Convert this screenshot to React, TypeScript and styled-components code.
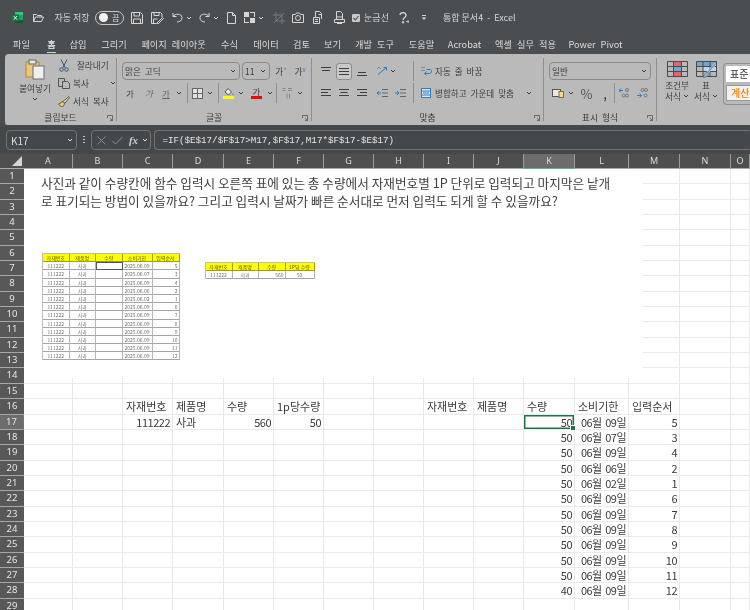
import React from "react";
import styled, { createGlobalStyle } from "styled-components";

const FONT = '"Noto Sans CJK KR", "Noto Sans", sans-serif';

const Global = createGlobalStyle`
  html, body { margin: 0; padding: 0; background: #fff; }
  #root { width: 750px; height: 610px; overflow: hidden; }
`;

const Page = styled.div`
  width: 750px;
  height: 610px;
  overflow: hidden;
  background: #4b4e51;
  font-family: ${FONT};
  filter: blur(0.3px);
`;

const TitleBar = styled.div`
  height: 35px;
  display: flex;
  align-items: center;
  color: #d6d6d6;
  font-size: 9px;
  line-height: 12px;
  white-space: nowrap;
`;

const Spot = styled.div<{ $ml?: number; $w?: number; $h?: number; $justify?: string }>`
  flex: none;
  margin-left: ${(p) => p.$ml ?? 0}px;
  ${(p) => (p.$w !== undefined ? `width: ${p.$w}px;` : "")}
  ${(p) => (p.$h !== undefined ? `height: ${p.$h}px;` : "")}
  display: flex;
  align-items: center;
  justify-content: ${(p) => p.$justify ?? "center"};
  white-space: nowrap;
`;

const Toggle = styled.div`
  flex: none;
  margin-left: 5px;
  width: 29px;
  height: 14px;
  box-sizing: border-box;
  border: 1px solid #c8c8c8;
  border-radius: 7px;
  display: flex;
  align-items: center;
  padding-left: 3px;
  gap: 4px;
  font-size: 8px;
`;

const Knob = styled.span`
  width: 9px;
  height: 9px;
  border-radius: 50%;
  background: #f2f2f2;
`;

const TabBar = styled.div`
  height: 19px;
  display: flex;
  align-items: center;
  color: #dcdcdc;
  font-size: 9.2px;
  line-height: 13px;
  word-spacing: 3px;
`;

const Tab = styled.div<{ $ml: number; $w: number; $active?: boolean }>`
  flex: none;
  position: relative;
  margin-left: ${(p) => p.$ml}px;
  width: ${(p) => p.$w}px;
  white-space: nowrap;
  display: flex;
  justify-content: center;
  ${(p) => (p.$active ? "font-weight: 500; color: #f0f0f0;" : "")}
  &::after {
    content: "";
    display: ${(p) => (p.$active ? "block" : "none")};
    position: absolute;
    left: 0;
    right: 0;
    bottom: -2px;
    height: 1.5px;
    background: #b5e0ca;
  }
`;

const Ribbon = styled.div`
  margin-left: 5px;
  height: 71px;
  background: #bababa;
  border-radius: 4px 0 0 4px;
  box-shadow: 0 1px 0 #8d8d8d;
  display: flex;
  color: #3d3d3d;
  font-size: 8.6px;
  line-height: 11px;
  word-spacing: 2px;
  overflow: hidden;
`;

const Group = styled.div<{ $w: number }>`
  flex: none;
  width: ${(p) => p.$w}px;
  position: relative;
  display: flex;
  flex-direction: column;
`;

const GroupBody = styled.div`
  height: 57px;
  box-sizing: border-box;
  padding-top: 7px;
  display: flex;
  flex-direction: column;
  gap: 2px;
`;

const GroupLabel = styled.div`
  text-align: center;
  height: 14px;
  line-height: 13px;
  font-size: 8.8px;
  color: #3a3a3a;
`;

const Launcher = styled.svg`
  position: absolute;
  right: 3px;
  bottom: 4px;
  width: 6px;
  height: 6px;
  color: #555;
`;

const GroupSep = styled.div`
  flex: none;
  width: 1px;
  margin: 4px 0 4px;
  background: #8f8f8f;
`;

const Row = styled.div`
  height: 20px;
  display: flex;
  align-items: center;
`;

const RowSep = styled.div<{ $ml: number }>`
  flex: none;
  margin-left: ${(p) => p.$ml}px;
  width: 1px;
  height: 20px;
  background: #8f8f8f;
`;

const ClipBody = styled.div`
  height: 57px;
  display: flex;
`;

const PasteCol = styled.div`
  flex: none;
  width: 42px;
  padding: 5px 0 0 9px;
  display: flex;
  flex-direction: column;
  align-items: center;
  gap: 2px;
`;

const ClipList = styled.div`
  flex: none;
  padding-top: 2px;
  margin-left: 2px;
  display: flex;
  flex-direction: column;
`;

const ClipItem = styled.div`
  height: 18.5px;
  display: flex;
  align-items: center;
  gap: 3px;
  white-space: nowrap;
`;

const Select = styled.div<{ $ml: number; $w: number }>`
  flex: none;
  margin-left: ${(p) => p.$ml}px;
  width: ${(p) => p.$w}px;
  height: 18px;
  box-sizing: border-box;
  border: 1.5px solid #8a8a8a;
  border-radius: 4px;
  display: flex;
  align-items: center;
  justify-content: space-between;
  padding: 0 3px 0 2px;
  white-space: nowrap;
`;

const GlyphChar = styled.span<{ $tone?: string; $deco?: string; $style?: string; $size?: number }>`
  font-size: ${(p) => p.$size ?? 8.5}px;
  color: ${(p) => p.$tone ?? "#444"};
  font-style: ${(p) => p.$style ?? "normal"};
  text-decoration: ${(p) => p.$deco ?? "none"};
`;

const GrowMark = styled.span`
  font-size: 6px;
  color: #2b7cc4;
  align-self: flex-start;
  line-height: 8px;
`;

const ColorBar = styled.div<{ $color: string }>`
  width: 11px;
  height: 3px;
  background: ${(p) => p.$color};
`;

const ColorStack = styled.div`
  display: flex;
  flex-direction: column;
  align-items: center;
  line-height: 9px;
`;

const Pressed = styled.div`
  flex: none;
  margin-left: 5px;
  width: 16px;
  height: 17px;
  box-sizing: border-box;
  background: #c9c9c9;
  border: 1px solid #8d8d8d;
  border-radius: 3px;
  display: flex;
  align-items: center;
  justify-content: center;
`;

const StyleBody = styled.div`
  height: 57px;
  display: flex;
  padding-top: 7px;
  box-sizing: border-box;
`;

const StyleBtn = styled.div<{ $ml: number; $w: number }>`
  flex: none;
  margin-left: ${(p) => p.$ml}px;
  width: ${(p) => p.$w}px;
  display: flex;
  flex-direction: column;
  align-items: center;
  line-height: 10.5px;
  white-space: nowrap;
`;

const StyleText = styled.div<{ $mt?: number }>`
  display: flex;
  align-items: center;
  gap: 2px;
  height: 10.5px;
  margin-top: ${(p) => p.$mt ?? 0}px;
`;

const Gallery = styled.div`
  flex: none;
  margin: 2px 0 0 5px;
  width: 40px;
  height: 42px;
  box-sizing: border-box;
  border: 1px solid #8f8f8f;
  border-right: 0;
  border-radius: 4px 0 0 4px;
  padding: 2px 0 0 2px;
  display: flex;
  flex-direction: column;
  gap: 3px;
`;

const StyleChip = styled.div<{ $bg: string; $fg: string }>`
  height: 16px;
  background: ${(p) => p.$bg};
  color: ${(p) => p.$fg};
  font-size: 10px;
  line-height: 16px;
  padding-left: 4px;
  white-space: nowrap;
  ${(p) => (p.$bg === "#fff" ? "" : "border: 1px solid #999; border-right: 0; box-sizing: border-box; line-height: 14px; font-weight: 500;")}
`;

const FormulaZone = styled.div`
  height: 29px;
  box-sizing: border-box;
  padding: 5px 0 4px;
  background: #45484a;
  display: flex;
  color: #dedede;
`;

const FBox = styled.div<{ $ml: number; $w?: number; $grow?: boolean }>`
  margin-left: ${(p) => p.$ml}px;
  ${(p) => (p.$w ? `width: ${p.$w}px; flex: none;` : "")}
  ${(p) => (p.$grow ? "flex: 1;" : "")}
  height: 20px;
  box-sizing: border-box;
  border: 1px solid #737373;
  border-right-color: ${(p) => (p.$grow ? "transparent" : "#737373")};
  border-radius: ${(p) => (p.$grow ? "4px 0 0 4px" : "4px")};
  display: flex;
  align-items: center;
`;

const NameText = styled.span`
  font-size: 10px;
  margin-left: 4px;
  width: 56px;
`;

const Dots = styled.div`
  flex: none;
  margin-left: 6px;
  width: 1.5px;
  height: 8px;
  align-self: center;
  background: repeating-linear-gradient(#c4c4c4 0 1.5px, transparent 1.5px 3px);
`;

const Fx = styled.span`
  font-family: "Liberation Serif", serif;
  font-style: italic;
  font-size: 11px;
  font-weight: 700;
  color: #d0d0d0;
`;

const FormulaText = styled.span`
  margin-left: 8px;
  font-family: "Liberation Mono", monospace;
  font-size: 9.2px;
  color: #e6e6e6;
  white-space: nowrap;
`;

const COLS = [24, 49, 50, 50, 51, 50, 50, 50, 50, 50, 50, 51, 54, 51, 51, 19];
const ROW_H = 15.35;

const Sheet = styled.div`
  position: relative;
  height: 456px;
  background: #fff;
  display: grid;
  grid-template-columns: ${COLS.map((c) => c + "px").join(" ")};
  grid-template-rows: 15px repeat(29, ${ROW_H}px);
  color: #3a3a3a;
`;

const Corner = styled.div`
  background: #4f4f4f;
  border-bottom: 1px solid #aaa;
  box-sizing: border-box;
  position: relative;
  overflow: hidden;
  &::after {
    content: "";
    position: absolute;
    right: 2px;
    bottom: 2px;
    border-style: solid;
    border-width: 0 0 10px 10px;
    border-color: transparent transparent #d4d4d4 transparent;
  }
`;

const ColHead = styled.div<{ $on?: boolean }>`
  box-sizing: border-box;
  background: ${(p) => (p.$on ? "#6c6c6c" : "#4f4f4f")};
  border-right: 1px solid #9c9c9c;
  border-bottom: ${(p) => (p.$on ? "1.5px solid #5fb58a" : "1px solid #aaa")};
  color: #dcdcdc;
  font-family: "Noto Sans", sans-serif;
  font-size: 9px;
  line-height: 14px;
  text-align: center;
`;

const RowHead = styled.div<{ $on?: boolean }>`
  box-sizing: border-box;
  background: ${(p) => (p.$on ? "#6c6c6c" : "#585858")};
  border-bottom: 1px solid #a8a8a8;
  ${(p) => (p.$on ? "border-right: 1.5px solid #2f9a63;" : "")}
  color: #e6e6e6;
  font-family: "Noto Sans", sans-serif;
  font-size: 9.5px;
  line-height: 14px;
  text-align: center;
`;

const Cell = styled.div<{ $right?: boolean; $sel?: boolean }>`
  box-sizing: border-box;
  position: relative;
  border-right: 1px solid #e9e9e9;
  border-bottom: 1px solid #e9e9e9;
  font-size: 11px;
  line-height: 15px;
  padding: 0 2px 0 3px;
  white-space: nowrap;
  overflow: visible;
  text-align: ${(p) => (p.$right ? "right" : "left")};
  ${(p) => (p.$right ? "letter-spacing: -0.5px; word-spacing: 1.5px;" : "")}
  ${(p) =>
    p.$sel
      ? `box-shadow: inset 0 0 0 1.5px #217346;
         &::after { content: ""; position: absolute; right: -2px; bottom: -2px; width: 4px; height: 4px; background: #217346; border: 0.5px solid #fff; z-index: 2; }`
      : ""}
`;

const Panel = styled.div`
  position: absolute;
  left: 24px;
  top: 15px;
  width: 619px;
  height: 209px;
  background: #fff;
  box-sizing: border-box;
  padding: 5px 0 0 17px;
`;

const QuestionLine = styled.div`
  font-size: 12.65px;
  line-height: 18px;
  color: #404040;
  white-space: nowrap;
`;

const Shots = styled.div`
  display: flex;
  align-items: flex-start;
  margin: 43px 0 0 1px;
  gap: 25px;
  filter: blur(0.25px);
`;

const MiniTable = styled.div<{ $cols: string; $top?: number }>`
  flex: none;
  margin-top: ${(p) => p.$top ?? 0}px;
  display: grid;
  grid-template-columns: ${(p) => p.$cols};
  grid-auto-rows: 8.2px;
  border-top: 0.5px solid #bbb;
  border-left: 0.5px solid #bbb;
`;

const MiniHead = styled.div`
  box-sizing: border-box;
  background: #ffff00;
  border-right: 0.5px solid #a0a000;
  border-bottom: 0.5px solid #a0a000;
  font-size: 5px;
  line-height: 8px;
  text-align: center;
  color: #55550c;
  white-space: nowrap;
`;

const MiniCell = styled.div<{ $align?: string; $picked?: boolean }>`
  box-sizing: border-box;
  border-right: 0.5px solid #b5b5b5;
  border-bottom: 0.5px solid #a5a5a5;
  font-size: 5px;
  line-height: 8px;
  color: #707070;
  padding: 0 1px;
  text-align: ${(p) => p.$align ?? "center"};
  white-space: nowrap;
  ${(p) => (p.$picked ? "outline: 1px solid #555; outline-offset: -1px;" : "")}
`;

type IconProps = { w: number; h: number; vb?: string; color?: string; children: React.ReactNode };
const Svg = ({ w, h, vb, color, children }: IconProps) => (
  <svg
    width={w}
    height={h}
    viewBox={vb ?? `0 0 ${w} ${h}`}
    fill="none"
    stroke={color ?? "currentColor"}
    strokeWidth={1}
    style={{ flex: "none", display: "block" }}
  >
    {children}
  </svg>
);

const Chev = ({ c }: { c?: string }) => (
  <Svg w={6} h={4} color={c}>
    <path d="M1 1l2 2 2-2" />
  </Svg>
);

const Lines = ({ ys, xs }: { ys: number[]; xs: [number, number][] }) => (
  <Svg w={10} h={12}>
    {ys.map((y, i) => (
      <path key={i} d={`M${xs[i][0]} ${y}H${xs[i][1]}`} />
    ))}
  </Svg>
);

const ExcelLogo = () => (
  <Svg w={11} h={11} color="none">
    <rect x={3} y={0} width={8} height={11} fill="#21a366" />
    <rect x={3} y={0} width={8} height={3} fill="#33c481" />
    <rect x={3} y={8} width={8} height={3} fill="#185c37" />
    <rect x={0} y={2.5} width={7} height={6.5} fill="#107c41" />
    <path d="M1.8 4l3.2 3.6M5 4L1.8 7.6" stroke="#fff" strokeWidth={0.9} />
  </Svg>
);

const Launch = () => (
  <Launcher viewBox="0 0 6 6" fill="none" stroke="currentColor">
    <path d="M.5 3V.5H5.5V3M3 3l2.5 2.5M5.5 3v2.5H3" strokeWidth={0.8} />
  </Launcher>
);

const PasteIcon = () => (
  <Svg w={20} h={21}>
    <rect x={1} y={3} width={13} height={15} fill="#e6c97f" stroke="#b9862b" />
    <rect x={4} y={1} width={7} height={4} fill="#e8e8e8" stroke="#666" />
    <rect x={8} y={7} width={11} height={13} fill="#efefef" stroke="#6d6d6d" />
  </Svg>
);

const GridIcon = ({ fillA, fillB }: { fillA: string; fillB: string }) => (
  <Svg w={21} h={16} color="#4b4b4b">
    <rect x={6.5} y={0.5} width={8} height={5} fill={fillA} stroke="none" />
    <rect x={6.5} y={5.5} width={8} height={5} fill={fillB} stroke="none" />
    <rect x={6.5} y={10.5} width={8} height={5} fill={fillA} stroke="none" />
    <path d="M.5.5h20v15H.5zM.5 5.5h20M.5 10.5h20M6.5.5v15M14.5.5v15" />
  </Svg>
);

const TableBrushIcon = () => (
  <Svg w={21} h={18} color="#4b4b4b">
    <rect x={0.5} y={0.5} width={20} height={5} fill="#6fa8d6" stroke="none" />
    <rect x={7} y={5.5} width={13} height={5} fill="#bcd6ea" stroke="none" />
    <path d="M.5.5h20v15H.5zM.5 5.5h20M.5 10.5h20M7 .5v15M14 .5v15" />
    <path d="M19.5 3L11 12" stroke="#e8e8e8" strokeWidth={2.4} />
    <path d="M19.5 3L11 12" stroke="#5d8fb8" strokeWidth={1.2} />
    <path d="M11.5 11.2c-2.5.3-3.4 2.2-4 5.3 2.7-.3 5-1.4 5.5-4z" fill="#8db4d6" stroke="#4c6f8c" strokeWidth={0.7} />
  </Svg>
);

const names = ["자재번호", "제품명", "수량", "소비기한", "입력순서"];
const shotDays = ["09", "07", "09", "06", "02", "09", "09", "09", "09", "09", "09", "09"];
const orders = [5, 3, 4, 2, 1, 6, 7, 8, 9, 10, 11, 12];

const cells: Record<string, { t: string; r?: boolean }> = {
  C16: { t: "자재번호" },
  D16: { t: "제품명" },
  E16: { t: "수량" },
  F16: { t: "1p당수량" },
  C17: { t: "111222", r: true },
  D17: { t: "사과" },
  E17: { t: "560", r: true },
  F17: { t: "50", r: true },
  I16: { t: "자재번호" },
  J16: { t: "제품명" },
  K16: { t: "수량" },
  L16: { t: "소비기한" },
  M16: { t: "입력순서" },
};
orders.forEach((n, i) => {
  const row = 17 + i;
  cells[`K${row}`] = { t: i === 11 ? "40" : "50", r: true };
  cells[`L${row}`] = { t: `06월 ${shotDays[i]}일`, r: true };
  cells[`M${row}`] = { t: String(n), r: true };
});

const letters = "ABCDEFGHIJKLMNO".split("");
const tabs: [string, number, number][] = [
  ["파일", 13, 17],
  ["홈", 17, 9],
  ["삽입", 13, 18],
  ["그리기", 13, 28],
  ["페이지 레이아웃", 12, 67],
  ["수식", 14, 17],
  ["데이터", 15, 26],
  ["검토", 14, 17],
  ["보기", 14, 17],
  ["개발 도구", 14, 39],
  ["도움말", 14, 27],
  ["Acrobat", 13, 33],
  ["엑셀 실무 적용", 14, 61],
  ["Power Pivot", 15, 49],
];

export default function App() {
  return (
    <Page>
      <Global />
      <TitleBar>
        <Spot $ml={12} $w={11}><ExcelLogo /></Spot>
        <Spot $ml={10} $w={11}>
          <Svg w={11} h={10}><path d="M.5 8.5v-7h3l1 1h4v1.500M.5 8.500l2-4.500h8l-2 4.500z" /></Svg>
        </Spot>
        <Spot $ml={10} $w={36}>자동 저장</Spot>
        <Toggle><Knob />끔</Toggle>
        <Spot $ml={7} $w={12}>
          <Svg w={12} h={12}><path d="M.5.5h9l2 2v9H.5zM3 .5v3.500h5.500V.5M2.500 11.500V7h7v4.500" /></Svg>
        </Spot>
        <Spot $ml={8} $w={13}>
          <Svg w={13} h={12}><path d="M.5.5h9l1.500 1.500v3M3 .5v3h5V.5M.5.5v11h5M2.500 11V7h4M6 11l5.500-5.500 1 1L7 12H6z" /></Svg>
        </Spot>
        <Spot $ml={8} $w={11}>
          <Svg w={11} h={11}><path d="M1 1v3.500h3.500M1 4.500C3 1.500 9.500 1 10 5.500c.3 3-2.500 4.500-5 4.500" /></Svg>
        </Spot>
        <Spot $ml={3} $w={6}><Chev /></Spot>
        <Spot $ml={7} $w={11}>
          <Svg w={11} h={11}><path d="M10 1v3.500H6.500M10 4.500C8 1.500 1.500 1 1 5.500c-.3 3 2.500 4.500 5 4.500" /></Svg>
        </Spot>
        <Spot $ml={3} $w={6}><Chev /></Spot>
        <Spot $ml={8} $w={9}>
          <Svg w={9} h={12}><path d="M.5.5h5l3 3v8h-8zM5.500.5v3h3" /></Svg>
        </Spot>
        <Spot $ml={8} $w={11}>
          <Svg w={11} h={11}>
            <rect x={0.5} y={0.5} width={10} height={10} />
            <rect x={0} y={0} width={5} height={5} fill="currentColor" />
            <rect x={5.5} y={5.5} width={5} height={5} fill="currentColor" />
            <path d="M0 5.500h11M5.500 0v11" stroke="#4b4e51" />
          </Svg>
        </Spot>
        <Spot $ml={3} $w={6}><Chev /></Spot>
        <Spot $ml={9} $w={12}>
          <Svg w={12} h={12} color="#777"><path d="M3 0v9h9M0 3h9v9M1 11L11 1" /></Svg>
        </Spot>
        <Spot $ml={7} $w={12}>
          <Svg w={12} h={11}><path d="M.5 2.500h3l1-1.500h3l1 1.500h3v8H.5z" /><circle cx={6} cy={6} r={2.5} /></Svg>
        </Spot>
        <Spot $ml={9} $w={10}>
          <Svg w={10} h={13}><path d="M2.500 6V.5h4l2 2V8M5.500 3.500h3M.5 6.500h6v6h-6zM2 8.500h3M2 10.500h3" /></Svg>
        </Spot>
        <Spot $ml={11} $w={11}>
          <Svg w={11} h={13}><path d="M2.500 6V.5h4l2 2V6M.5 8.500h10v3h-10zM2.500 8.500V6h6v2.500M3 12.500h5" /></Svg>
        </Spot>
        <Spot $ml={7} $w={8}>
          <Svg w={8} h={8} color="none">
            <rect width={8} height={8} rx={1} fill="#c9c9c9" />
            <path d="M1.500 4l2 2 3-4" stroke="#4b4e51" strokeWidth={1.1} />
          </Svg>
        </Spot>
        <Spot $ml={4} $w={25}>눈금선</Spot>
        <Spot $ml={10} $w={10}>
          <Svg w={10} h={12}>
            <path d="M1 3c.5-3.200 6-3 6 .3C7 6 4 5.500 4 8" strokeWidth={1.3} />
            <circle cx={4} cy={10.3} r={0.8} fill="currentColor" />
            <path d="M7 9.500h3M8.700 8l1.300 1.500L8.700 11" strokeWidth={0.8} />
          </Svg>
        </Spot>
        <Spot $ml={12} $w={6}>
          <Svg w={6} h={6}><path d="M1 .5h4" /><path d="M.8 2.500h4.400L3 5z" fill="currentColor" stroke="none" /></Svg>
        </Spot>
        <Spot $ml={16}>통합 문서4&nbsp; -&nbsp; Excel</Spot>
      </TitleBar>

      <TabBar>
        {tabs.map(([label, ml, w], i) => (
          <Tab key={label} $ml={ml} $w={w} $active={i === 1}>{label}</Tab>
        ))}
      </TabBar>

      <Ribbon>
        <Group $w={111}>
          <ClipBody>
            <PasteCol>
              <PasteIcon />
              <Spot $h={13} $w={36}>붙여넣기</Spot>
              <Chev />
            </PasteCol>
            <ClipList>
              <ClipItem>
                <Spot $w={12}>
                  <Svg w={10} h={13} color="#33587f"><path d="M2 .5l4 8M8 .5l-4 8" /><circle cx={2.5} cy={10.5} r={1.8} /><circle cx={7.5} cy={10.5} r={1.8} /></Svg>
                </Spot>
                &nbsp;잘라내기
              </ClipItem>
              <ClipItem>
                <Spot $w={12}>
                  <Svg w={12} h={11} color="#555"><path d="M.5.5h6v8h-6z" /><path d="M4.500 3.500h5l2 2v5h-7z" fill="#bababa" /></Svg>
                </Spot>
                복사
                <Spot $ml={18} $w={6}><Chev /></Spot>
              </ClipItem>
              <ClipItem>
                <Spot $w={12}>
                  <Svg w={12} h={11} color="#6b5b33"><path d="M5 5.500l6-5 .8.8-5 6z" fill="#dddddd" /><path d="M5 5.500L.5 8c.5 1 2.500 3 4 3 1-1 2-2.500 2-3.700z" fill="#e6c97f" /></Svg>
                </Spot>
                서식 복사
              </ClipItem>
            </ClipList>
          </ClipBody>
          <GroupLabel>클립보드</GroupLabel>
          <Launch />
        </Group>
        <GroupSep />

        <Group $w={194}>
          <GroupBody>
            <Row>
              <Select $ml={5} $w={118}>맑은 고딕<Chev /></Select>
              <Select $ml={2} $w={28}><span>11</span><Chev /></Select>
              <Spot $ml={4} $w={14}>가<GrowMark>^</GrowMark></Spot>
              <Spot $ml={5} $w={14}>가<GrowMark>v</GrowMark></Spot>
            </Row>
            <Row>
              <Spot $ml={7} $w={12}><GlyphChar>가</GlyphChar></Spot>
              <Spot $ml={7} $w={12}><GlyphChar $style="italic" $tone="#666">가</GlyphChar></Spot>
              <Spot $ml={5} $w={12}><GlyphChar $deco="underline" $tone="#666">가</GlyphChar></Spot>
              <Spot $ml={4} $w={6}><Chev /></Spot>
              <RowSep $ml={5} />
              <Spot $ml={4} $w={11}>
                <Svg w={11} h={11} color="#666"><rect x={0.5} y={0.5} width={10} height={10} fill="#e2e2e2" /><path d="M5.500 0v11M0 5.500h11" /></Svg>
              </Spot>
              <Spot $ml={4} $w={6}><Chev /></Spot>
              <RowSep $ml={5} />
              <Spot $ml={4} $w={11}>
                <ColorStack>
                  <Svg w={10} h={8} color="#555"><path d="M4 .5L7.500 4 4.500 7 1 4z" fill="#e9e9e9" /><path d="M9 5c.7 1 .7 2 0 2.300-.7-.3-.7-1.300 0-2.300z" fill="#2b7cc4" stroke="none" /></Svg>
                  <ColorBar $color="#ffff00" />
                </ColorStack>
              </Spot>
              <Spot $ml={4} $w={6}><Chev /></Spot>
              <Spot $ml={7} $w={11}>
                <ColorStack>
                  <GlyphChar>가</GlyphChar>
                  <ColorBar $color="#ff0000" />
                </ColorStack>
              </Spot>
              <Spot $ml={5} $w={6}><Chev /></Spot>
              <RowSep $ml={3} />
              <Spot $ml={5} $w={11}>
                <Svg w={11} h={12} color="#5b93c4"><path d="M.5 1.500h3M.5 3.500h3M6 1.500h4M6 3.500h4" stroke="#888" /><path d="M5 6.500v5M7.500 6.500v5" /></Svg>
              </Spot>
              <Spot $ml={4} $w={6}><Chev /></Spot>
            </Row>
          </GroupBody>
          <GroupLabel>글꼴</GroupLabel>
          <Launch />
        </Group>
        <GroupSep />

        <Group $w={231}>
          <GroupBody>
            <Row>
              <Spot $ml={9} $w={10}><Lines ys={[2.5, 5.5]} xs={[[0, 10], [1, 9]]} /></Spot>
              <Pressed><Lines ys={[3.5, 6.5, 9.5]} xs={[[0, 10], [0, 10], [0, 10]]} /></Pressed>
              <Spot $ml={5} $w={10}><Lines ys={[7.5, 10.5]} xs={[[1, 9], [0, 10]]} /></Spot>
              <Spot $ml={10} $w={11}>
                <Svg w={11} h={10} color="#2b7cc4"><path d="M1 8.500L9.500 1.500M6.500 1.500h3v3" /><path d="M0 3l2 -2 2 2" stroke="#888" /></Svg>
              </Spot>
              <Spot $ml={2} $w={6}><Chev /></Spot>
              <RowSep $ml={17} />
              <Spot $ml={7} $w={11}>
                <Svg w={11} h={11} color="#2b7cc4"><path d="M0 1.500h4M0 4.500h4" stroke="#888" /><path d="M5.500 3.500H9.500c1.500 0 1.500 4 -1 4H3.500M5.500 5.500l-2 2 2 2" /></Svg>
              </Spot>
              <Spot $ml={3}>자동 줄 바꿈</Spot>
            </Row>
            <Row>
              <Spot $ml={9} $w={10}><Lines ys={[2.5, 5.5, 8.5]} xs={[[0, 10], [0, 7], [0, 10]]} /></Spot>
              <Spot $ml={8} $w={10}><Lines ys={[2.5, 5.5, 8.5]} xs={[[0, 10], [1.5, 8.5], [0, 10]]} /></Spot>
              <Spot $ml={8} $w={10}><Lines ys={[2.5, 5.5, 8.5]} xs={[[0, 10], [3, 10], [0, 10]]} /></Spot>
              <Spot $ml={10} $w={11}>
                <Svg w={11} h={10} color="#666"><path d="M5 1.500h6M5 5h6M5 8.500h6" /><path d="M4 5H0M2 3L0 5l2 2" stroke="#2b7cc4" /></Svg>
              </Spot>
              <Spot $ml={7} $w={11}>
                <Svg w={11} h={10} color="#666"><path d="M5 1.500h6M5 5h6M5 8.500h6" /><path d="M0 5h4M2 3l2 2-2 2" stroke="#2b7cc4" /></Svg>
              </Spot>
              <RowSep $ml={7} />
              <Spot $ml={7} $w={10}>
                <Svg w={10} h={10} color="#2b7cc4"><rect x={0.5} y={0.5} width={9} height={9} fill="#dfe9f2" /><path d="M0 3h10M0 7h10M2 5h6" /></Svg>
              </Spot>
              <Spot $ml={4} $w={80} $justify="flex-start">병합하고 가운데 맞춤</Spot>
              <Spot $ml={11} $w={6}><Chev /></Spot>
            </Row>
          </GroupBody>
          <GroupLabel>맞춤</GroupLabel>
          <Launch />
        </Group>
        <GroupSep />

        <Group $w={112}>
          <GroupBody>
            <Row>
              <Select $ml={5} $w={102}>일반<Chev /></Select>
            </Row>
            <Row>
              <Spot $ml={8} $w={12}>
                <Svg w={12} h={9} color="#555"><rect x={0.5} y={0.5} width={8} height={7} fill="#e8e8e8" /><rect x={7} y={2.5} width={4.5} height={6} fill="#f0d890" stroke="#8a6d1f" /></Svg>
              </Spot>
              <Spot $ml={4} $w={6}><Chev /></Spot>
              <Spot $ml={7} $w={11}><GlyphChar $tone="#555" $size={13}>%</GlyphChar></Spot>
              <Spot $ml={10} $w={6}><GlyphChar $tone="#333" $size={13}>,</GlyphChar></Spot>
              <RowSep $ml={6} />
              <Spot $ml={4} $w={11}>
                <Svg w={11} h={10} color="#777">
                  <path d="M0 2.500h4M2 .5L0 2.500l2 2" stroke="#2b7cc4" />
                  <circle cx={8} cy={2} r={1.5} /><circle cx={8} cy={7.5} r={1.5} /><circle cx={4.5} cy={7.5} r={1.5} />
                </Svg>
              </Spot>
              <Spot $ml={7} $w={11}>
                <Svg w={11} h={10} color="#777">
                  <path d="M0 7.500h4.500M2.500 5.500l2 2-2 2" stroke="#2b7cc4" />
                  <circle cx={5.5} cy={2} r={1.5} /><circle cx={9} cy={2} r={1.5} /><circle cx={8.5} cy={7.5} r={1.5} />
                </Svg>
              </Spot>
            </Row>
          </GroupBody>
          <GroupLabel>표시 형식</GroupLabel>
          <Launch />
        </Group>
        <GroupSep />

        <Group $w={100}>
          <StyleBody>
            <StyleBtn $ml={8} $w={24}>
              <GridIcon fillA="#e2646c" fillB="#6fa8d6" />
              <StyleText $mt={3}>조건부</StyleText>
              <StyleText>서식<Chev /></StyleText>
            </StyleBtn>
            <StyleBtn $ml={5} $w={24}>
              <TableBrushIcon />
              <StyleText $mt={1}>표</StyleText>
              <StyleText>서식<Chev /></StyleText>
            </StyleBtn>
            <Gallery>
              <StyleChip $bg="#fff" $fg="#333">표준</StyleChip>
              <StyleChip $bg="#f2f2f2" $fg="#fa7d00">계산</StyleChip>
            </Gallery>
          </StyleBody>
        </Group>
      </Ribbon>

      <FormulaZone>
        <FBox $ml={6} $w={71}>
          <NameText>K17</NameText>
          <Chev />
        </FBox>
        <Dots />
        <FBox $ml={6} $w={60}>
          <Spot $ml={4} $w={11}><Svg w={9} h={9} color="#8a8a8a"><path d="M.5.5l8 8M8.500.5l-8 8" /></Svg></Spot>
          <Spot $ml={5} $w={11}><Svg w={11} h={9} color="#8a8a8a"><path d="M.5 5l3 3 7-7" /></Svg></Spot>
          <Spot $ml={5} $w={12}><Fx>fx</Fx></Spot>
          <Spot $ml={1} $w={8}><Chev /></Spot>
        </FBox>
        <FBox $ml={3} $grow>
          <FormulaText>=IF($E$17/$F$17&gt;M17,$F$17,M17*$F$17-$E$17)</FormulaText>
        </FBox>
      </FormulaZone>

      <Sheet>
        <Corner />
        {letters.map((l) => (
          <ColHead key={l} $on={l === "K"}>{l}</ColHead>
        ))}
        {Array.from({ length: 29 }, (_, r) => r + 1).map((row) => (
          <React.Fragment key={row}>
            <RowHead $on={row === 17}>{row}</RowHead>
            {letters.map((l) => {
              const id = `${l}${row}`;
              const c = cells[id];
              return (
                <Cell key={id} $right={c?.r} $sel={id === "K17"}>{c?.t}</Cell>
              );
            })}
          </React.Fragment>
        ))}
        <Panel>
          <QuestionLine>사진과 같이 수량칸에 함수 입력시 오른쪽 표에 있는 총 수량에서 자재번호별 1P 단위로 입력되고 마지막은 낱개</QuestionLine>
          <QuestionLine>로 표기되는 방법이 있을까요? 그리고 입력시 날짜가 빠른 순서대로 먼저 입력도 되게 할 수 있을까요?</QuestionLine>
          <Shots>
            <MiniTable $cols="26.5px 26.5px 26.5px 30px 27px">
              {names.map((n) => <MiniHead key={n}>{n}</MiniHead>)}
              {orders.map((n, i) => (
                <React.Fragment key={n}>
                  <MiniCell>111222</MiniCell>
                  <MiniCell>사과</MiniCell>
                  <MiniCell $picked={i === 0} />
                  <MiniCell>2025.06.{shotDays[i]}</MiniCell>
                  <MiniCell $align="right">{n}</MiniCell>
                </React.Fragment>
              ))}
            </MiniTable>
            <MiniTable $cols="27px 26px 27px 29px" $top={9}>
              {["자재번호", "제품명", "수량", "1P당 수량"].map((n) => <MiniHead key={n}>{n}</MiniHead>)}
              <MiniCell>111222</MiniCell>
              <MiniCell>사과</MiniCell>
              <MiniCell $align="right">560</MiniCell>
              <MiniCell>50</MiniCell>
            </MiniTable>
          </Shots>
        </Panel>
      </Sheet>
    </Page>
  );
}
